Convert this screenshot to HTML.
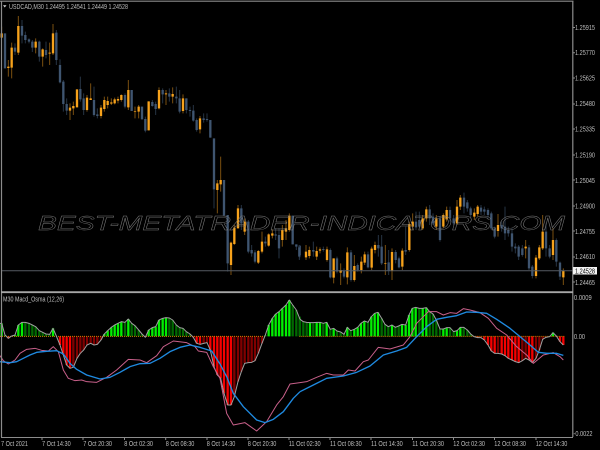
<!DOCTYPE html>
<html><head><meta charset="utf-8"><style>
html,body{margin:0;padding:0;background:#000;width:600px;height:450px;overflow:hidden}
svg{display:block;filter:blur(.35px)}
text{font-family:"Liberation Sans",sans-serif;font-size:7px;fill:#bcbcbc}
</style></head><body>
<svg width="600" height="450" viewBox="0 0 600 450" xmlns="http://www.w3.org/2000/svg">
<rect width="600" height="450" fill="#000"/>
<g fill="none" stroke-linejoin="round">
<g transform="scale(.33333)">
<path stroke="#7a4f10" stroke-width="3" d="M5 80V113M25 180V230M35 128V235M55 48V165M107 115V160M128 145V200M149 128V195M159 72V165M210 310V360M220 305V345M231 268V322M261 285V335M272 250V300M303 315V355M313 290V335M323 290V325M334 295V315M344 293V313M354 290V310M364 283V305M385 240V330M405 320V355M416 315V355M446 304V391M477 262V328M498 270V315M518 262V310M549 283V340M600 348V400"/>
<path stroke="#263444" stroke-width="3" d="M15 100V205M45 130V165M66 60V130M76 95V130M87 115V130M97 120V156M118 122V185M138 125V175M169 90V195M180 178V250M190 240V335M200 295V345M241 230V305M251 280V345M282 260V350M292 325V355M375 280V325M395 270V333M426 320V358M436 350V397M457 300V320M467 305V345M488 265V310M508 265V305M529 260V310M539 270V340M559 295V340M570 320V350M580 315V365M590 355V395M611 340V368M621 340V365M631 360V413"/>
<path stroke="#3f5570" stroke-width="7" d="M15 100V205M45 143V155M66 78V107M76 105V120M87 118V125M97 125V143M118 125V170M138 150V165M169 98V180M180 195V247M190 245V312M200 312V332M241 267V298M251 295V330M282 300V345M292 343V348M375 285V320M395 270V333M426 320V358M436 357V392M457 306V318M467 312V327M488 270V283M508 280V290M529 290V295M539 295V335M559 295V330M570 330V333M580 332V362M590 360V390M611 355V360M621 357V360M631 360V413M642 415V450"/>
<path stroke="#f7a21b" stroke-width="7" d="M5 100V113M25 200V204M35 143V203M55 78V158M107 125V143M128 148V170M149 158V161M159 100V160M210 323V332M220 318V325M231 268V322M261 293V330M272 295V300M303 323V348M313 300V327M323 303V315M334 307V311M344 298V310M354 297V302M364 285V300M385 270V322M405 333V335M416 320V335M446 304V391M477 270V325M498 280V283M518 282V290M549 295V333M600 355V388"/>
</g>
<g transform="translate(0,150) scale(.33333)">
<path stroke="#7a4f10" stroke-width="3" d="M652 90V190M662 20V125M693 275V375M703 225V285M714 165V235M734 205V255M775 300V342M786 245V310M806 250V290M817 238V265M847 225V290M858 210V270M868 190V245"/>
<path stroke="#263444" stroke-width="3" d="M642 0V175M672 90V197M683 195V365M724 165V240M745 210V310M755 285V320M765 300V340M796 260V290M827 235V270M837 235V325M878 197V283M889 283V300M899 287V325"/>
<path stroke="#3f5570" stroke-width="7" d="M642 0V118M672 90V197M683 195V340M724 175V220M745 215V305M755 300V310M765 307V335M796 275V280M827 253V257M837 255V295M878 197V283M889 283V290M899 287V315"/>
<path stroke="#f7a21b" stroke-width="7" d="M652 100V120M662 90V103M693 278V345M703 233V282M714 175V235M734 215V245M775 303V338M786 275V305M806 253V287M817 250V257M847 240V270M858 235V245M868 197V240"/>
</g>
<g transform="translate(300,150) scale(.33333)">
<path stroke="#7a4f10" stroke-width="3" d="M18 285V330M28 290V325M50 290V330M60 292V310M81 290V335M101 325V400M122 340V405M142 292V403M163 315V395M184 320V370M194 305V345M215 290V360M225 275V310M256 285V375M276 295V390M307 295V360M328 215V305M338 190V240M368 195V240M379 170V215M409 195V240M430 190V235M440 170V215M471 150V225M481 135V180M523 175V210M533 165V200M594 192V260M677 270V325M708 315V385M718 285V330M728 195V300M759 235V330M790 355V405"/>
<path stroke="#263444" stroke-width="3" d="M-2 285V330M40 275V320M70 290V305M91 295V385M111 320V370M132 355V385M153 300V395M173 340V365M204 305V355M235 255V320M245 255V345M266 300V375M287 300V340M297 320V355M317 230V315M348 185V240M358 185V235M389 165V225M399 190V225M420 200V275M450 170V215M461 195V225M492 128V190M502 150V185M512 170V205M543 165V195M553 170V195M564 175V205M574 185V240M584 230V265M605 215V245M615 170V270M625 230V260M636 235V305M646 280V310M656 285V330M667 285V320M687 285V360M697 345V385M738 220V320M749 285V325M769 265V350M780 335V390"/>
<path stroke="#3f5570" stroke-width="7" d="M-2 292V320M40 300V305M70 297V300M91 300V382M111 325V365M132 362V380M153 307V390M173 345V360M204 313V352M235 285V295M245 290V340M266 337V362M287 306V330M297 325V352M317 300V305M348 215V232M358 210V230M389 178V205M399 200V220M420 205V270M450 180V205M461 205V220M492 143V170M502 157V175M512 175V195M543 173V185M553 178V185M564 180V195M574 190V235M584 235V260M605 225V235M615 230V250M625 240V250M636 250V290M646 290V295M656 290V320M667 295V315M687 292V355M697 350V378M738 245V295M749 295V320M769 270V335M780 338V380"/>
<path stroke="#f7a21b" stroke-width="7" d="M18 305V322M28 300V318M50 303V320M60 298V302M81 298V330M101 325V383M122 360V368M142 307V382M163 348V390M184 335V360M194 313V338M215 296V353M225 285V300M256 339V341M276 306V362M307 302V350M328 222V300M338 215V230M368 205V235M379 178V205M409 205V230M430 195V230M440 180V208M471 170V220M481 143V170M523 188V200M533 170V192M594 225V243M677 290V295M708 323V378M718 292V325M728 245V295M759 270V315M790 362V382"/>
</g>
<g transform="translate(0,290) scale(.33333)">
<path stroke="#00f000" stroke-width="7" d="M5 139V100M45 139V135M55 139V105M66 139V97M159 139V115M313 139V132M323 139V122M334 139V112M344 139V105M354 139V100M364 139V95M385 139V87M446 139V120M457 139V113M467 139V110M477 139V90M488 139V85M498 139V83M806 139V105M817 139V85M827 139V72M837 139V65M847 139V55M858 139V45M868 139V30"/>
<path stroke="#006a00" stroke-width="7" d="M15 139V135M76 139V97M87 139V100M97 139V105M107 139V110M118 139V122M128 139V127M138 139V132M149 139V133M375 139V97M395 139V100M405 139V107M416 139V120M426 139V132M508 139V84M518 139V90M529 139V105M539 139V113M549 139V115M559 139V125M570 139V132M796 139V135M878 139V45M889 139V60M899 139V80"/>
<path stroke="#f50000" stroke-width="7" d="M25 139V145M180 139V165M190 139V195M200 139V225M210 139V235M580 139V142M590 139V160M600 139V163M631 139V180M642 139V230M652 139V255M662 139V265M672 139V310M683 139V345M693 139V345"/>
<path stroke="#800000" stroke-width="7" d="M220 139V232M231 139V205M241 139V190M251 139V180M261 139V165M272 139V160M282 139V165M292 139V163M303 139V150M611 139V160M621 139V158M703 139V320M714 139V275M724 139V245M734 139V220M745 139V218M755 139V217M765 139V212M775 139V190M786 139V160"/>
<path stroke="#c88000" stroke-width="3" stroke-dasharray="3 3" d="M0 139H793"/>
<path stroke="#a0a0a0" stroke-width="3" d="M0 100L5 100L15 135L25 145L35 138L45 135L55 105L66 97L76 97L87 100L97 105L107 110L118 122L128 127L138 132L149 133L159 115L169 138L180 165L190 195L200 225L210 235L220 232L231 205L241 190L251 180L261 165L272 160L282 165L292 163L303 150L313 132L323 122L334 112L344 105L354 100L364 95L375 97L385 87L395 100L405 107L416 120L426 132L436 142L446 120L457 113L467 110L477 90L488 85L498 83L508 84L518 90L529 105L539 113L549 115L559 125L570 132L580 142L590 160L600 163L611 160L621 158L631 180L642 230L652 255L662 265L672 310L683 345L693 345L703 320L714 275L724 245L734 220L745 218L755 217L765 212L775 190L786 160L796 135L806 105L817 85L827 72L837 65L847 55L858 45L868 30L878 45L889 60L900 88"/>
<path stroke="#c8608a" stroke-width="3" d="M0 197L10 212L25 222L45 210L60 190L80 178L105 175L125 181L145 183L160 170L175 185L190 240L205 265L225 272L245 270L260 275L290 277L320 262L350 240L385 208L420 210L440 218L470 197L490 170L520 153L560 158L585 170L595 183L620 187L640 230L660 265L680 370L700 405L735 398L770 423L800 395L830 345L850 320L870 282L900 278"/>
<path stroke="#1f8ae0" stroke-width="4" d="M0 215L30 218L50 215L70 205L90 195L110 187L140 184L170 182L190 192L210 220L230 238L260 255L300 267L330 262L360 247L390 230L420 221L450 220L480 205L510 185L540 172L570 165L600 172L635 183L660 222L680 260L700 310L730 350L770 390L795 398L820 388L850 365L880 325L900 305"/>
</g>
<g transform="translate(300,290) scale(.33333)">
<path stroke="#00f000" stroke-width="7" d="M30 139V98M50 139V97M60 139V97M80 139V97M101 139V115M142 139V112M163 139V118M173 139V112M183 139V100M193 139V93M214 139V80M224 139V70M234 139V67M276 139V105M306 139V103M317 139V105M327 139V75M337 139V55M347 139V52M368 139V55M379 139V53M430 139V117M440 139V113M471 139V122M481 139V112M749 139V140M759 139V128"/>
<path stroke="#006a00" stroke-width="7" d="M0 139V88M10 139V95M20 139V97M40 139V98M70 139V100M91 139V118M111 139V123M122 139V126M132 139V133M152 139V122M204 139V97M245 139V85M255 139V103M265 139V110M286 139V112M296 139V108M358 139V55M389 139V65M399 139V72M409 139V90M420 139V117M450 139V113M461 139V125M491 139V112M502 139V120M512 139V132"/>
<path stroke="#f50000" stroke-width="7" d="M533 139V143M553 139V150M564 139V165M574 139V183M584 139V190M605 139V192M615 139V197M625 139V205M636 139V210M646 139V215M656 139V218M687 139V210M697 139V218M780 139V155M790 139V165"/>
<path stroke="#800000" stroke-width="7" d="M522 139V140M543 139V143M594 139V190M667 139V212M677 139V205M708 139V205M718 139V180M728 139V148M738 139V142"/>
<path stroke="#c88000" stroke-width="3" stroke-dasharray="3 3" d="M-2 139H793"/>
<path stroke="#a0a0a0" stroke-width="3" d="M0 88L10 95L20 97L30 98L40 98L50 97L60 97L70 100L80 97L91 118L101 115L111 123L122 126L132 133L142 112L152 122L163 118L173 112L183 100L193 93L204 97L214 80L224 70L234 67L245 85L255 103L265 110L276 105L286 112L296 108L306 103L317 105L327 75L337 55L347 52L358 55L368 55L379 53L389 65L399 72L409 90L420 117L430 117L440 113L450 113L461 125L471 122L481 112L491 112L502 120L512 132L522 140L533 143L543 143L553 150L564 165L574 183L584 190L594 190L605 192L615 197L625 205L636 210L646 215L656 218L667 212L677 205L687 210L697 218L708 205L718 180L728 148L738 142L749 140L759 128L769 138L780 155L790 165"/>
<path stroke="#c8608a" stroke-width="3" d="M0 278L20 275L50 262L80 250L100 255L130 255L145 240L165 243L190 215L205 210L235 172L270 177L310 165L330 140L350 100L385 65L410 65L430 75L450 68L470 70L490 56L510 60L540 68L565 85L590 115L620 135L650 170L680 195L700 220L730 195L760 188L780 200L790 210"/>
<path stroke="#1f8ae0" stroke-width="4" d="M0 305L40 285L80 265L130 258L170 247L210 228L250 195L290 183L320 172L350 140L380 110L410 88L440 82L470 77L500 66L530 67L560 70L590 88L630 115L660 140L690 165L715 187L740 190L770 190L790 196"/>
</g>
</g>
<path d="M2 270.7H573" stroke="#555b63" stroke-width="1" fill="none"/>
<g fill="none" stroke="#8c8c8c">
<path stroke-width="1.2" d="M0 1.2H573.5M1.5 1V437M572.8 1V437"/>
<path stroke-width="1.8" stroke="#a6a6a6" d="M1 292.2H573"/>
<path stroke-width="1" d="M1 437.5H573"/>
<path stroke-width="1" d="M42 437V440M83 437V440M124.500 437V440M165.700 437V440M207 437V440M248 437V440M289 437V440M330 437V440M371 437V440M412.500 437V440M453.500 437V440M494.500 437V440M536 437V440M573 27.500H575M573 52.700H575M573 78H575M573 104H575M573 129H575M573 155H575M573 180H575M573 206H575M573 231H575M573 257H575M573 282H575"/>
</g>
<text x="38" y="230" textLength="527" lengthAdjust="spacingAndGlyphs" style="font-size:20px;font-style:italic;fill:none;stroke:#7c7c7c;stroke-width:.4px">BEST-METATRADER-INDICATORS.COM</text>
<path d="M3 5.300H6.500L4.750 7.500Z" fill="#d0d0d0"/>
<text x="9" y="9" textLength="119" lengthAdjust="spacingAndGlyphs">USDCAD,M30  1.24495 1.24541 1.24449 1.24528</text>
<text x="3" y="301.500" textLength="61" lengthAdjust="spacingAndGlyphs">M30  Macd_Osma (12,26)</text>
<text x="575" y="30.200" textLength="20" lengthAdjust="spacingAndGlyphs">1.25915</text>
<text x="575" y="55.200" textLength="20" lengthAdjust="spacingAndGlyphs">1.25770</text>
<text x="575" y="80.700" textLength="20" lengthAdjust="spacingAndGlyphs">1.25625</text>
<text x="575" y="106.200" textLength="20" lengthAdjust="spacingAndGlyphs">1.25480</text>
<text x="575" y="131.700" textLength="20" lengthAdjust="spacingAndGlyphs">1.25335</text>
<text x="575" y="157.500" textLength="20" lengthAdjust="spacingAndGlyphs">1.25190</text>
<text x="575" y="182.800" textLength="20" lengthAdjust="spacingAndGlyphs">1.25045</text>
<text x="575" y="208.300" textLength="20" lengthAdjust="spacingAndGlyphs">1.24900</text>
<text x="575" y="233.800" textLength="20" lengthAdjust="spacingAndGlyphs">1.24755</text>
<text x="575" y="259.200" textLength="20" lengthAdjust="spacingAndGlyphs">1.24610</text>
<text x="575" y="284.800" textLength="20" lengthAdjust="spacingAndGlyphs">1.24465</text>
<rect x="573" y="267" width="24" height="7.500" fill="#f2f2f2"/>
<text x="575" y="273.300" textLength="20" lengthAdjust="spacingAndGlyphs" style="fill:#000">1.24528</text>
<text x="574" y="299.800" textLength="17.700" lengthAdjust="spacingAndGlyphs">0.0009</text>
<text x="574" y="339" textLength="11" lengthAdjust="spacingAndGlyphs">0.00</text>
<text x="573.500" y="436" textLength="19" lengthAdjust="spacingAndGlyphs">-0.0022</text>
<text x="1" y="446" textLength="27" lengthAdjust="spacingAndGlyphs">7 Oct 2021</text>
<text x="42" y="446" textLength="28.700" lengthAdjust="spacingAndGlyphs">7 Oct 14:30</text>
<text x="83.300" y="446" textLength="28.700" lengthAdjust="spacingAndGlyphs">7 Oct 20:30</text>
<text x="124.300" y="446" textLength="28.700" lengthAdjust="spacingAndGlyphs">8 Oct 02:30</text>
<text x="165.700" y="446" textLength="28.700" lengthAdjust="spacingAndGlyphs">8 Oct 08:30</text>
<text x="206.700" y="446" textLength="28.700" lengthAdjust="spacingAndGlyphs">8 Oct 14:30</text>
<text x="247.700" y="446" textLength="28.700" lengthAdjust="spacingAndGlyphs">8 Oct 20:30</text>
<text x="288.700" y="446" textLength="32" lengthAdjust="spacingAndGlyphs">11 Oct 02:30</text>
<text x="330" y="446" textLength="31.700" lengthAdjust="spacingAndGlyphs">11 Oct 08:30</text>
<text x="371" y="446" textLength="31.700" lengthAdjust="spacingAndGlyphs">11 Oct 14:30</text>
<text x="412.300" y="446" textLength="31.700" lengthAdjust="spacingAndGlyphs">11 Oct 20:30</text>
<text x="453.300" y="446" textLength="31.700" lengthAdjust="spacingAndGlyphs">12 Oct 02:30</text>
<text x="494.300" y="446" textLength="31.700" lengthAdjust="spacingAndGlyphs">12 Oct 08:30</text>
<text x="535.700" y="446" textLength="31.700" lengthAdjust="spacingAndGlyphs">12 Oct 14:30</text>
</svg>
</body></html>
